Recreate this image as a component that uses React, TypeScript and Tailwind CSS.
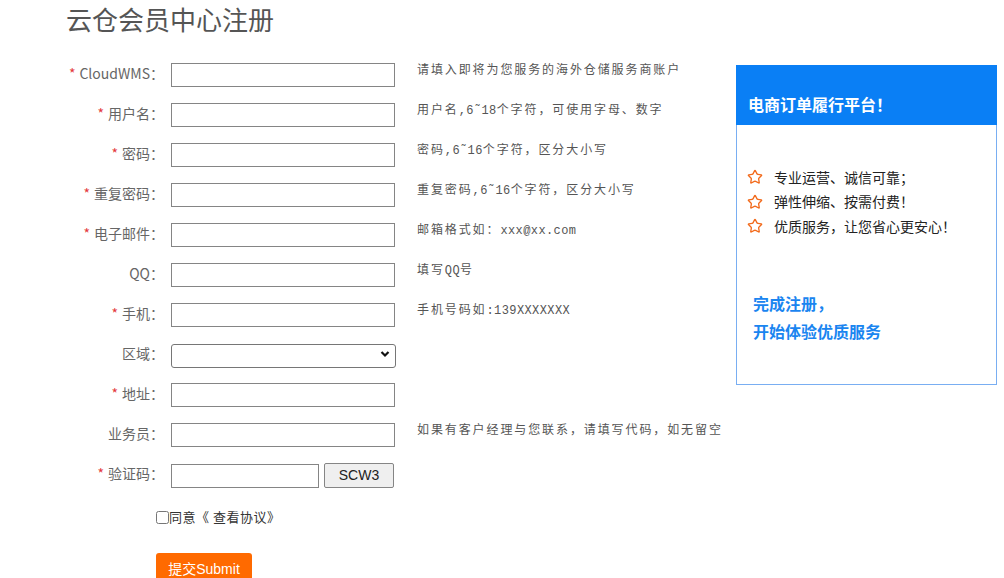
import React from "react";
import { Star } from "lucide-react";

type Row = {
  label: string;
  req: boolean;
  hint?: React.ReactNode;
  kind?: "input" | "select" | "captcha";
};

const Mono = ({ children }: { children: React.ReactNode }) => (
  <span className="tracking-[0.4px] font-['Liberation_Mono',monospace]">{children}</span>
);

const rows: Row[] = [
  { label: "CloudWMS", req: true, hint: "请填入即将为您服务的海外仓储服务商账户" },
  {
    label: "用户名",
    req: true,
    hint: (
      <>
        用户名<Mono>,6˜18</Mono>个字符，可使用字母、数字
      </>
    ),
  },
  {
    label: "密码",
    req: true,
    hint: (
      <>
        密码<Mono>,6˜16</Mono>个字符，区分大小写
      </>
    ),
  },
  {
    label: "重复密码",
    req: true,
    hint: (
      <>
        重复密码<Mono>,6˜16</Mono>个字符，区分大小写
      </>
    ),
  },
  {
    label: "电子邮件",
    req: true,
    hint: (
      <>
        邮箱格式如：<Mono>xxx@xx.com</Mono>
      </>
    ),
  },
  {
    label: "QQ",
    req: false,
    hint: (
      <>
        填写<Mono>QQ</Mono>号
      </>
    ),
  },
  {
    label: "手机",
    req: true,
    hint: (
      <>
        手机号码如<Mono>:139XXXXXXX</Mono>
      </>
    ),
  },
  { label: "区域", req: false, kind: "select" },
  { label: "地址", req: true },
  { label: "业务员", req: false, hint: "如果有客户经理与您联系，请填写代码，如无留空" },
  { label: "验证码", req: true, kind: "captcha" },
];

function Field({ kind }: { kind?: Row["kind"] }) {
  if (kind === "select") {
    return (
      <div className="relative w-[225px] h-[24px] -mt-[1px]">
        <select className="appearance-none w-full h-full border border-[#767676] rounded-[3px] bg-white text-[13px] outline-none">
          <option value=""></option>
        </select>
        <svg
          className="absolute right-[6px] top-[8px] pointer-events-none"
          width="10"
          height="8"
          viewBox="0 0 10 8"
        >
          <path d="M1.5 2 L5 5.5 L8.5 2" fill="none" stroke="#111" strokeWidth="2.2" />
        </svg>
      </div>
    );
  }
  if (kind === "captcha") {
    return (
      <div className="flex items-center gap-[5px]">
        <input className="w-[148px] h-[24px] border border-[#858585] bg-white outline-none" />
        <button className="w-[70px] h-[25px] border border-[#858585] rounded-[2px] bg-[#efefef] text-[14px] text-[#222] font-['Liberation_Sans',Arial,sans-serif]">
          SCW3
        </button>
      </div>
    );
  }
  return <input className="w-[224px] h-[24px] border border-[#858585] bg-white outline-none" />;
}

export default function App() {
  return (
    <div className="w-[1004px] h-[578px] overflow-hidden bg-white font-['Noto_Sans_CJK_SC','Microsoft_YaHei',sans-serif] flex">
      <div className="w-[736px] shrink-0">
        <div className="h-[55px] pl-[66px] pt-[1px]">
          <h1 className="text-[26px] leading-[36px] text-[#555] font-normal">云仓会员中心注册</h1>
        </div>
        <div className="flex flex-col">
          {rows.map((r) => (
            <div key={r.label} className="h-[40px] flex items-start">
              <div className="w-[164px] h-[36px] flex items-center justify-end text-[14px] text-[#666] whitespace-nowrap">
                {r.req && <span className="text-[#e4393c] mr-[4px]">*</span>}
                <span>{r.label}：</span>
              </div>
              <div className="ml-[7px] w-[224px] mt-[8px]">
                <Field kind={r.kind} />
              </div>
              {r.hint && (
                <div className="ml-[22px] mt-[5px] text-[12px] leading-[18px] text-[#555] tracking-[1.9px] whitespace-nowrap">
                  {r.hint}
                </div>
              )}
            </div>
          ))}
        </div>
        <div className="pl-[156px] mt-[11px] flex items-center h-[22px] text-[13px] text-[#333]">
          <input type="checkbox" className="w-[13px] h-[13px] m-0 mr-0" />
          <span className="tracking-[0.5px]">同意《 查看协议》</span>
        </div>
        <div className="pl-[156px] mt-[25px]">
          <button className="w-[96px] h-[32px] bg-[#ff6a00] text-white text-[14px] rounded-[3px] font-['Liberation_Sans','Noto_Sans_CJK_SC',sans-serif]">
            提交Submit
          </button>
        </div>
      </div>
      <div className="mt-[65px] w-[261px] h-[320px] border border-[#79aef2] flex flex-col">
        <div className="h-[60px] bg-[#0a7ff5] -mx-[1px] -mt-[1px] px-[12px] pt-[27px]">
          <span className="text-white text-[16px] font-bold leading-[24px]">电商订单履行平台！</span>
        </div>
        <ul className="mt-[40px] pl-[10px] flex flex-col text-[14px] text-[#222]">
          {["专业运营、诚信可靠；", "弹性伸缩、按需付费！", "优质服务，让您省心更安心！"].map((t) => (
            <li key={t} className="h-[24.5px] flex items-center">
              <Star size={16} color="#f26a1b" strokeWidth={2} />
              <span className="ml-[11px]">{t}</span>
            </li>
          ))}
        </ul>
        <div className="mt-[50px] pl-[16px] text-[16px] font-bold text-[#1a85f0] leading-[28px]">
          <div>完成注册，</div>
          <div>开始体验优质服务</div>
        </div>
      </div>
    </div>
  );
}
